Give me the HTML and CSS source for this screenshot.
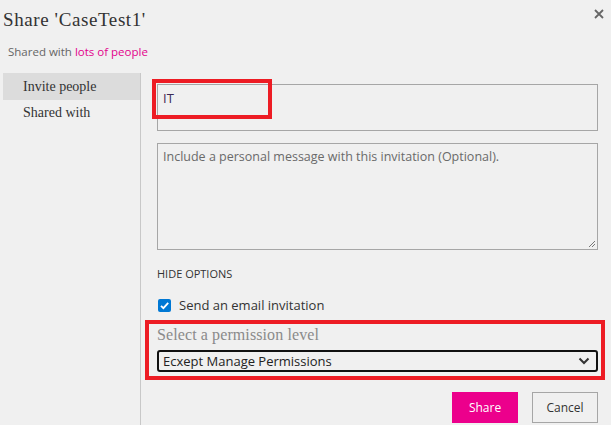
FILE: index.html
```html
<!DOCTYPE html>
<html>
<head>
<meta charset="utf-8">
<link rel="stylesheet" href="styles.css">
</head>
<body>
<div class="dialog">
  <div class="header">
    <h1 class="title">Share 'CaseTest1'</h1>
    <button class="close" aria-label="Close">
      <svg width="10" height="10" viewBox="0 0 10 10"><path d="M1 1L9 9M9 1L1 9" stroke="#666" stroke-width="1.8"/></svg>
    </button>
  </div>
  <div class="subtitle">Shared with <a class="link" href="#">lots of people</a></div>
  <div class="body">
    <nav class="nav">
      <div class="nav-item active">Invite people</div>
      <div class="nav-item">Shared with</div>
    </nav>
    <div class="content">
      <div class="people-input"><span class="typed">IT</span></div>
      <div class="message">Include a personal message with this invitation (Optional).
        <svg class="grip" width="8" height="8" viewBox="0 0 8 8"><path d="M7 1L1 7M7 4L4 7" stroke="#777" stroke-width="1"/></svg>
      </div>
      <div class="hide-options">HIDE OPTIONS</div>
      <label class="check-row">
        <span class="checkbox"><svg width="13" height="13" viewBox="0 0 13 13"><path d="M3 6.8L5.4 9.2L10.2 3.8" fill="none" stroke="#fff" stroke-width="1.8"/></svg></span>
        <span>Send an email invitation</span>
      </label>
      <div class="perm-label">Select a permission level</div>
      <div class="select">
        <span>Ecxept Manage Permissions</span>
        <svg width="12" height="8" viewBox="0 0 12 8"><path d="M1.5 1.5L6 6L10.5 1.5" fill="none" stroke="#333" stroke-width="2"/></svg>
      </div>
      <div class="actions">
        <button class="btn primary">Share</button>
        <button class="btn">Cancel</button>
      </div>
    </div>
  </div>
  <div class="mark mark-input"></div>
  <div class="mark mark-perm"></div>
</div>
</body>
</html>
```
FILE: styles.css
```css
* { box-sizing: border-box; }
html, body { margin: 0; padding: 0; }
body { background: #f0f0f0; }
.dialog {
  position: relative;
  width: 611px;
  height: 425px;
  background: #f0f0f0;
  overflow: hidden;
  font-family: "Open Sans", "Noto Sans", sans-serif;
  color: #333;
}
.header {
  display: flex;
  justify-content: space-between;
  align-items: flex-start;
  padding: 0 7px 0 3px;
  height: 42px;
}
.title {
  margin: 0;
  padding-top: 8px;
  font-family: "Liberation Serif", serif;
  font-weight: normal;
  font-size: 19px;
  letter-spacing: 0.6px;
  line-height: 24px;
  color: #333;
}
.close {
  border: 0;
  background: none;
  padding: 0;
  margin-top: 9px;
  width: 10px;
  height: 10px;
  display: flex;
}
.subtitle {
  padding-left: 8px;
  font-size: 11.5px;
  line-height: 20px;
  color: #666;
  height: 31px;
}
.link { color: #e3008c; text-decoration: none; }
.body {
  display: flex;
  height: 352px;
}
.nav {
  width: 138px;
  margin-left: 3px;
  border-right: 1px solid #c8c8c8;
  flex-shrink: 0;
}
.nav-item {
  font-family: "Liberation Serif", serif;
  font-size: 14px;
  height: 27px;
  line-height: 27px;
  padding-left: 20px;
  color: #333;
}
.nav-item.active { background: #dcdcdc; }
.nav-item + .nav-item { line-height: 26px; }
.content {
  flex: 1;
  padding: 11px 13px 0 16px;
}
.people-input {
  height: 47px;
  border: 1px solid #a6a6a6;
  padding: 4px 5px;
  font-size: 13px;
}
.typed { color: #3c2a55; line-height: 17px; }
.message {
  position: relative;
  margin-top: 12px;
  height: 107px;
  border: 1px solid #a6a6a6;
  padding: 4px 5px;
  font-size: 12.5px;
  color: #6a6a6a;
}
.grip { position: absolute; right: 1px; bottom: 1px; }
.hide-options {
  margin-top: 17px;
  font-size: 11px;
  line-height: 14px;
  color: #333;
}
.check-row {
  display: flex;
  align-items: center;
  gap: 8px;
  margin-top: 17px;
  font-size: 13px;
  line-height: 14px;
  color: #333;
  padding-left: 1px;
}
.checkbox {
  width: 13px;
  height: 13px;
  border-radius: 2px;
  background: #0078d4;
  display: flex;
}
.perm-label {
  margin-top: 14px;
  font-family: "Liberation Serif", serif;
  font-size: 16px;
  letter-spacing: 0.1px;
  line-height: 18px;
  color: #8a8a8a;
}
.select {
  margin-top: 6px;
  height: 22px;
  border: 2px solid #111;
  border-radius: 3px;
  display: flex;
  align-items: center;
  justify-content: space-between;
  padding: 0 6px 0 4px;
  font-size: 13px;
  color: #222;
}
.actions {
  display: flex;
  justify-content: flex-end;
  gap: 14px;
  margin-top: 20px;
}
.btn {
  width: 66px;
  height: 31px;
  font-family: "Open Sans", "Noto Sans", sans-serif;
  font-size: 12px;
  border: 1px solid #a6a6a6;
  background: #f0f0f0;
  color: #333;
  padding: 0;
}
.btn.primary {
  background: #ec008c;
  border-color: #ec008c;
  color: #fff;
}
.mark {
  position: absolute;
  border: 4px solid #ed1c24;
  pointer-events: none;
}
.mark-input { left: 152px; top: 79px; width: 120px; height: 40px; }
.mark-perm { left: 145px; top: 320px; width: 460px; height: 60px; }
```
